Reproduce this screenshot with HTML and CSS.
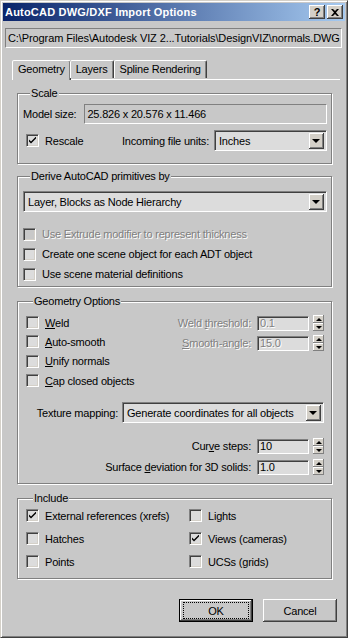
FILE: index.html
```html
<!DOCTYPE html>
<html>
<head>
<meta charset="utf-8">
<title>AutoCAD DWG/DXF Import Options</title>
<link rel="stylesheet" href="styles.css">
</head>
<body>
<div class="window">
  <div class="titlebar">
    <span class="title">AutoCAD DWG/DXF Import Options</span>
    <div class="tbtns">
      <span class="tbtn q">?</span>
      <span class="tbtn"><svg width="8" height="7" viewBox="0 0 8 7"><path d="M0 0h2l2 2 2-2h2L5 3.5 8 7H6L4 5 2 7H0l3-3.5z" fill="#000"/></svg></span>
    </div>
  </div>
  <div class="client">
    <div class="path">C:\Program Files\Autodesk VIZ 2...Tutorials\DesignVIZ\normals.DWG</div>
    <div class="tabs">
      <div class="tab active">Geometry</div>
      <div class="tab">Layers</div>
      <div class="tab">Spline Rendering</div>
    </div>
    <div class="panel">
      <div class="group g-scale">
        <div class="gtitle">Scale</div>
        <div class="row model">
          <span class="lbl">Model size:</span>
          <div class="field wide">25.826 x 20.576 x 11.466</div>
        </div>
        <div class="row rescale">
          <div class="chk"><span class="box"><svg width="7" height="7" viewBox="0 0 7 7"><path d="M0 2.5l2 2 5-5v2l-5 5-2-2z" fill="#000"/></svg></span><span>Rescale</span></div>
          <div class="units">
            <span class="lbl">Incoming file units:</span>
            <div class="combo c-units"><span class="ctext">Inches</span><span class="arrow"><i></i></span></div>
          </div>
        </div>
      </div>

      <div class="group g-derive">
        <div class="gtitle">Derive AutoCAD primitives by</div>
        <div class="combo c-derive"><span class="ctext">Layer, Blocks as Node Hierarchy</span><span class="arrow"><i></i></span></div>
        <div class="chks">
          <div class="chk dis"><span class="box"></span><span>Use Extrude modifier to represent thickness</span></div>
          <div class="chk"><span class="box"></span><span>Create one scene object for each ADT object</span></div>
          <div class="chk"><span class="box"></span><span>Use scene material definitions</span></div>
        </div>
      </div>

      <div class="group g-geo">
        <div class="gtitle">Geometry Options</div>
        <div class="geo-top">
          <div class="geo-left">
            <div class="chk"><span class="box"></span><span><u>W</u>eld</span></div>
            <div class="chk"><span class="box"></span><span><u>A</u>uto-smooth</span></div>
            <div class="chk"><span class="box"></span><span><u>U</u>nify normals</span></div>
            <div class="chk"><span class="box"></span><span><u>C</u>ap closed objects</span></div>
          </div>
          <div class="geo-right">
            <div class="spinrow dis"><span class="lbl">Weld <u>t</u>hreshold:</span><div class="field num">0.1</div><div class="spin"><span class="up"><i></i></span><span class="dn"><i></i></span></div></div>
            <div class="spinrow dis"><span class="lbl"><u>S</u>mooth-angle:</span><div class="field num">15.0</div><div class="spin"><span class="up"><i></i></span><span class="dn"><i></i></span></div></div>
          </div>
        </div>
        <div class="texrow">
          <span class="lbl">Texture mapping:</span>
          <div class="combo c-tex"><span class="ctext">Generate coordinates for all objects</span><span class="arrow"><i></i></span></div>
        </div>
        <div class="spins-bottom">
          <div class="spinrow"><span class="lbl">Cur<u>v</u>e steps:</span><div class="field num">10</div><div class="spin"><span class="up"><i></i></span><span class="dn"><i></i></span></div></div>
          <div class="spinrow"><span class="lbl">Surface <u>d</u>eviation for 3D solids:</span><div class="field num">1.0</div><div class="spin"><span class="up"><i></i></span><span class="dn"><i></i></span></div></div>
        </div>
      </div>

      <div class="group g-inc">
        <div class="gtitle">Include</div>
        <div class="inc-grid">
          <div class="chk"><span class="box"><svg width="7" height="7" viewBox="0 0 7 7"><path d="M0 2.5l2 2 5-5v2l-5 5-2-2z" fill="#000"/></svg></span><span>External references (xrefs)</span></div>
          <div class="chk"><span class="box"></span><span>Lights</span></div>
          <div class="chk"><span class="box"></span><span>Hatches</span></div>
          <div class="chk"><span class="box"><svg width="7" height="7" viewBox="0 0 7 7"><path d="M0 2.5l2 2 5-5v2l-5 5-2-2z" fill="#000"/></svg></span><span>Views (cameras)</span></div>
          <div class="chk"><span class="box"></span><span>Points</span></div>
          <div class="chk"><span class="box"></span><span>UCSs (grids)</span></div>
        </div>
      </div>
    </div>
    <div class="buttons">
      <div class="btn default"><span class="focus">OK</span></div>
      <div class="btn">Cancel</div>
    </div>
  </div>
</div>
</body>
</html>
```
FILE: styles.css
```css
* { box-sizing: border-box; }
html, body { margin: 0; padding: 0; }
body {
  font-family: "Liberation Sans", Arial, sans-serif;
  font-size: 11px;
  letter-spacing: -0.2px;
  color: #000;
  background: #c8c8c8;
}
.window {
  width: 348px;
  height: 638px;
  border: 1px solid;
  border-color: #d4d0c8 #404040 #404040 #d4d0c8;
  padding: 2px;
  box-shadow: inset 1px 1px #fff, inset -1px -1px #808080;
  background: #c8c8c8;
  display: flex;
  flex-direction: column;
}
.titlebar {
  height: 18px;
  flex: none;
  background: linear-gradient(to right, #0a246a, #a6caf0);
  display: flex;
  align-items: center;
  justify-content: space-between;
  padding: 0 2px 0 2px;
}
.title {
  color: #fff;
  font-weight: bold;
  font-size: 11px;
  letter-spacing: 0.2px;
}
.tbtns { display: flex; gap: 2px; }
.tbtn {
  width: 16px;
  height: 14px;
  background: #d4d0c8;
  box-shadow: inset -1px -1px #404040, inset 1px 1px #fff, inset -2px -2px #808080;
  display: flex;
  align-items: center;
  justify-content: center;
  font-weight: bold;
  font-size: 11px;
  line-height: 1;
  letter-spacing: 0;
}
.client {
  flex: 1;
  display: flex;
  flex-direction: column;
  padding: 7px 3px 0 2px;
}
.path {
  height: 20px;
  border: 1px solid;
  border-color: #808080 #fff #fff #808080;
  padding: 0 2px;
  line-height: 18px;
  white-space: nowrap;
  overflow: hidden;
  letter-spacing: -0.1px;
}
.tabs {
  margin-top: 11px;
  height: 20px;
  display: flex;
  align-items: flex-end;
  padding-left: 7px;
  position: relative;
  z-index: 1;
}
.tab {
  height: 18px;
  padding: 2px 5px 0 5px;
  border: 1px solid;
  border-bottom: none;
  border-color: #fff #404040 transparent #fff;
  border-radius: 2px 2px 0 0;
  box-shadow: inset -1px 0 #808080;
  background: #c8c8c8;
  margin-bottom: 1px;
}
.tab.active {
  height: 20px;
  margin: 0 -1px 0 0;
  padding: 2px 5px 0 5px;
  margin-bottom: -1px;
}
.tab.active + .tab { border-left-color: #fff; }
.panel {
  margin: 0 2px 0 7px;
  border-top: 1px solid #fff;
  padding: 13px 8px 0 5px;
  display: flex;
  flex-direction: column;
}
.group {
  border: 1px solid #808080;
  box-shadow: inset 1px 1px #fff, 1px 1px #fff;
  display: flex;
  flex-direction: column;
}
.gtitle {
  margin: -7px 0 0 7px;
  line-height: 13px;
  height: 13px;
  padding: 0 1px 0 1px;
  background: #c8c8c8;
  align-self: flex-start;
}
.lbl { white-space: nowrap; }
.row { display: flex; align-items: center; }
.g-scale { padding: 0 4px 11px 5px; height: 71px; }
.model { margin-top: 4px; }
.model .lbl { margin-right: 8px; }
.field {
  border: 1px solid;
  border-color: #808080 #fff #fff #808080;
  padding: 0 2px;
}
.field.wide { flex: 1; height: 20px; line-height: 18px; }
.rescale { margin-top: 6px; justify-content: space-between; }
.units { display: flex; align-items: center; gap: 5px; }
.chk {
  display: flex;
  align-items: center;
  gap: 6px;
  white-space: nowrap;
}
.box {
  width: 13px;
  height: 13px;
  flex: none;
  background: #dcdcdc;
  border: 1px solid;
  border-color: #808080 #fff #fff #808080;
  box-shadow: inset 1px 1px #404040, inset -1px -1px #d4d0c8;
  display: flex;
  align-items: center;
  justify-content: center;
}
.rescale .chk { margin-left: 3px; }
.combo {
  display: flex;
  align-items: center;
  justify-content: space-between;
  background: #dcdcdc;
  border: 1px solid;
  border-color: #808080 #fff #fff #808080;
  box-shadow: inset 1px 1px #404040;
  padding: 0 2px 0 4px;
}
.c-units { width: 113px; height: 21px; }
.arrow {
  width: 15px;
  height: 16px;
  background: #d4d0c8;
  box-shadow: inset -1px -1px #404040, inset 1px 1px #fff, inset -2px -2px #808080;
  display: flex;
  align-items: center;
  justify-content: center;
}
.arrow i {
  width: 0; height: 0;
  border-left: 4px solid transparent;
  border-right: 4px solid transparent;
  border-top: 4px solid #000;
  margin-right: 1px;
}
.g-derive { margin-top: 12px; height: 111px; padding: 0 4px 0 5px; }
.c-derive { height: 21px; margin-top: 8px; }
.chks { display: flex; flex-direction: column; margin-top: 12px; }
.chks .chk { height: 20px; }
.dis { color: #808080; text-shadow: 1px 1px #fff; }
.dis .box { background: #c8c8c8; }
.g-geo { margin-top: 14px; height: 183px; padding: 0 7px 0 8px; }
.geo-top { display: flex; justify-content: space-between; margin-top: 5px; }
.geo-left { display: flex; flex-direction: column; }
.geo-left .chk { height: 19.3px; }
.geo-right { display: flex; flex-direction: column; gap: 4px; padding-top: 2px; }
.spinrow { display: flex; align-items: center; justify-content: flex-end; }
.spinrow .lbl { margin-right: 6px; }
.field.num { width: 52px; height: 15px; line-height: 13px; background: #dcdcdc; box-shadow: inset 1px 1px #404040; }
.spin { display: flex; flex-direction: column; margin-left: 4px; }
.spin span {
  width: 11px; height: 8px;
  background: #d4d0c8;
  box-shadow: inset -1px -1px #808080, inset 1px 1px #fff;
  display: flex; align-items: center; justify-content: center;
}
.spin .up i { width:0;height:0;border-left:3px solid transparent;border-right:3px solid transparent;border-bottom:3px solid #000; }
.spin .dn i { width:0;height:0;border-left:3px solid transparent;border-right:3px solid transparent;border-top:3px solid #000; }
.dis .field.num { color: #808080; }
.texrow { display: flex; align-items: center; justify-content: flex-end; margin-top: 12px; gap: 4px; }
.c-tex { width: 202px; height: 21px; }
.spins-bottom { display: flex; flex-direction: column; gap: 5px; margin-top: 15px; }
.g-inc { margin-top: 14px; height: 81px; padding: 0 8px 0 8px; }
.inc-grid { display: grid; grid-template-columns: 163px 1fr; row-gap: 10px; margin-top: 4px; }
.buttons { display: flex; justify-content: flex-end; gap: 10px; margin-top: 20px; padding-right: 5px; }
.btn {
  width: 74px; height: 23px;
  background: #c8c8c8;
  box-shadow: inset -1px -1px #404040, inset 1px 1px #fff, inset -2px -2px #808080;
  display: flex; align-items: center; justify-content: center;
}
.btn.default { border: 1px solid #000; box-shadow: inset -1px -1px #404040, inset 1px 1px #fff, inset -2px -2px #808080; }
.focus { outline: 1px dotted #000; width: 64px; height: 15px; display: flex; align-items: center; justify-content: center; }
```
